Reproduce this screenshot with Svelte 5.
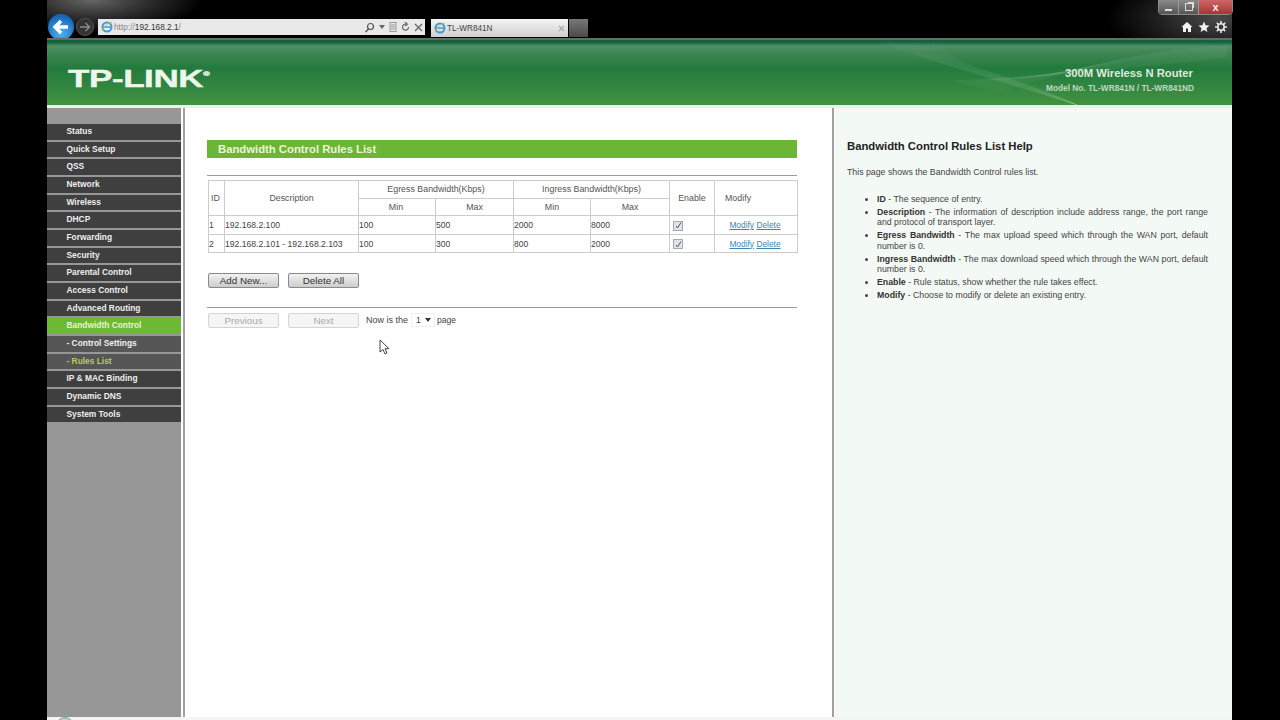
<script>
  const menu = [
    { label: 'Status' },
    { label: 'Quick Setup' },
    { label: 'QSS' },
    { label: 'Network' },
    { label: 'Wireless' },
    { label: 'DHCP' },
    { label: 'Forwarding' },
    { label: 'Security' },
    { label: 'Parental Control' },
    { label: 'Access Control' },
    { label: 'Advanced Routing' },
    { label: 'Bandwidth Control', kind: 'active' },
    { label: '- Control Settings', kind: 'sub' },
    { label: '- Rules List', kind: 'sub current' },
    { label: 'IP & MAC Binding' },
    { label: 'Dynamic DNS' },
    { label: 'System Tools' }
  ];

  const rules = [
    { id: 1, desc: '192.168.2.100', eMin: 100, eMax: 500, iMin: 2000, iMax: 8000 },
    { id: 2, desc: '192.168.2.101 - 192.168.2.103', eMin: 100, eMax: 300, iMin: 800, iMax: 2000 }
  ];

  const waves = [0, 1, 2, 3, 4, 5, 6, 7, 8, 9, 10, 11];
</script>

<div class="screen">
  <div class="glare"></div>

  <div class="win-buttons">
    <span class="wb"><i class="min"></i></span>
    <span class="wb"><i class="restore"></i></span>
    <span class="wb close">x</span>
  </div>

  <header class="chrome">
    <span class="back">
      <svg width="26" height="26" viewBox="0 0 26 26"><path d="M20 13H8M13 7l-6 6 6 6" fill="none" stroke="#fff" stroke-width="3.4"/></svg>
    </span>
    <span class="forward">
      <svg width="16" height="16" viewBox="0 0 16 16"><path d="M3 8h9M8.500 4l4 4-4 4" fill="none" stroke="#8a8a8a" stroke-width="1.500"/></svg>
    </span>
    <div class="address">
      <svg class="ie" width="12" height="12" viewBox="0 0 12 12"><circle cx="6" cy="6" r="4.500" fill="none" stroke="#3f9bd8" stroke-width="2"/><path d="M2 6h8" stroke="#3f9bd8" stroke-width="1.500"/><path d="M1 10C3 5 7 2 11 1" fill="none" stroke="#d9b84a" stroke-width="1"/></svg>
      <span class="url"><span class="dim">http://</span><b>192.168.2.1</b><span class="dim">/</span></span>
      <span class="addr-tools">
        <svg width="11" height="11" viewBox="0 0 11 11"><circle cx="6.500" cy="4.500" r="3" fill="none" stroke="#555" stroke-width="1.200"/><path d="M4.500 7L1.500 10" stroke="#555" stroke-width="1.400"/></svg>
        <svg width="6" height="4" viewBox="0 0 6 4"><path d="M0 0h6L3 4z" fill="#666"/></svg>
        <svg width="8" height="10" viewBox="0 0 8 10"><rect x="1" y="0.500" width="6" height="9" fill="none" stroke="#999"/><path d="M2 3h4M2 5h4M2 7h4" stroke="#999"/></svg>
        <svg width="9" height="10" viewBox="0 0 9 10"><path d="M7.500 5A3 3 0 1 1 5 2.200M4 0l2.500 2.200L4.300 4" fill="none" stroke="#666" stroke-width="1.100"/></svg>
        <svg width="9" height="9" viewBox="0 0 9 9"><path d="M1 1l7 7M8 1L1 8" stroke="#666" stroke-width="1.300"/></svg>
      </span>
    </div>
    <div class="tab">
      <svg class="ie" width="12" height="12" viewBox="0 0 12 12"><circle cx="6" cy="6" r="4.500" fill="none" stroke="#3f9bd8" stroke-width="2"/><path d="M2 6h8" stroke="#3f9bd8" stroke-width="1.500"/><path d="M1 10C3 5 7 2 11 1" fill="none" stroke="#d9b84a" stroke-width="1"/></svg>
      <span class="tab-title">TL-WR841N</span>
      <svg class="tab-x" width="7" height="7" viewBox="0 0 7 7"><path d="M1 1l5 5M6 1L1 6" stroke="#aaa" stroke-width="1.300"/></svg>
    </div>
    <div class="new-tab"></div>
    <div class="tools">
      <svg width="12" height="12" viewBox="0 0 12 12"><path d="M6 1L0.500 6H2v5h3V7.500h2V11h3V6h1.500z" fill="#f2f2f2"/></svg>
      <svg width="12" height="12" viewBox="0 0 12 12"><path d="M6 0.500l1.600 3.700 3.900 .4-3 2.600 .9 3.900L6 9l-3.400 2.100 .9-3.900-3-2.600 3.900-.4z" fill="#f2f2f2"/></svg>
      <svg width="12" height="12" viewBox="0 0 12 12"><circle cx="6" cy="6" r="3.200" fill="none" stroke="#e8e8e8" stroke-width="1.600"/><path d="M6 0v2.400M6 9.600V12M0 6h2.400M9.600 6H12M1.800 1.800l1.700 1.700M8.500 8.500l1.700 1.700M10.200 1.800L8.500 3.500M3.500 8.500l-1.700 1.700" stroke="#e8e8e8" stroke-width="1.600"/></svg>
    </div>
  </header>

  <div class="window">
    <div class="banner">
      <svg class="waves" width="350" height="65" viewBox="0 0 350 65">
        {#each waves as w}
          <path d="M{w * 5} 2C{50 + w * 3} {22 + w} {110} {38 - w} 195 65" fill="none" stroke="#fff" stroke-opacity=".05"/>
          <path d="M345 {6 + w}C{280 - w * 5} {8 + w * 2} {200 - w * 3} {26 + w} {115 - w * 4} {52 - w}" fill="none" stroke="#fff" stroke-opacity=".05"/>
        {/each}
      </svg>
      <div class="logo">TP-LINK<sup>®</sup></div>
      <div class="model">
        <div class="model-name">300M Wireless N Router</div>
        <div class="model-no">Model No. TL-WR841N / TL-WR841ND</div>
      </div>
    </div>

    <div class="body">
      <nav class="side">
        <div class="side-head"></div>
        {#each menu as m}
          <div class="item {m.kind ?? ''}">{m.label}</div>
        {/each}
      </nav>

      <main class="content">
        <h1 class="title">Bandwidth Control Rules List</h1>
        <div class="rule first"></div>

        <table>
          <colgroup>
            <col style="width:16px" /><col style="width:134px" /><col style="width:77px" /><col style="width:78px" />
            <col style="width:77px" /><col style="width:79px" /><col style="width:45px" /><col style="width:83px" />
          </colgroup>
          <thead>
            <tr>
              <th rowspan="2">ID</th>
              <th rowspan="2">Description</th>
              <th colspan="2">Egress Bandwidth(Kbps)</th>
              <th colspan="2">Ingress Bandwidth(Kbps)</th>
              <th rowspan="2">Enable</th>
              <th rowspan="2" class="mod-head">Modify</th>
            </tr>
            <tr>
              <th>Min</th><th>Max</th><th>Min</th><th>Max</th>
            </tr>
          </thead>
          <tbody>
            {#each rules as r}
              <tr>
                <td>{r.id}</td>
                <td>{r.desc}</td>
                <td>{r.eMin}</td>
                <td>{r.eMax}</td>
                <td>{r.iMin}</td>
                <td>{r.iMax}</td>
                <td class="chk">
                  <span class="check">
                    <svg width="7" height="7" viewBox="0 0 7 7"><path d="M1 4l1.500 2L6 .5" fill="none" stroke="#555" stroke-width="1"/></svg>
                  </span>
                </td>
                <td class="center"><a href="#m">Modify</a> <a href="#d">Delete</a></td>
              </tr>
            {/each}
          </tbody>
        </table>

        <div class="btns actions">
          <button>Add New...</button>
          <button>Delete All</button>
        </div>
        <div class="rule second"></div>
        <div class="btns pager">
          <button disabled>Previous</button>
          <button disabled>Next</button>
          <span class="now">Now is the</span>
          <span class="select">1<svg width="6" height="4" viewBox="0 0 6 4"><path d="M0 0h6L3 4z" fill="#333"/></svg></span>
          <span>page</span>
        </div>

        <svg class="cursor" width="12" height="16" viewBox="0 0 12 16"><path d="M1 1v12l3-2.500 2 4.500 2-1-2-4.300h4z" fill="#fff" stroke="#444" stroke-width="1"/></svg>
      </main>

      <aside class="help">
        <h2>Bandwidth Control Rules List Help</h2>
        <p>This page shows the Bandwidth Control rules list.</p>
        <ul>
          <li><b>ID</b> - The sequence of entry.</li>
          <li><b>Description</b> - The information of description include address range, the port range and protocol of transport layer.</li>
          <li><b>Egress Bandwidth</b> - The max upload speed which through the WAN port, default number is 0.</li>
          <li><b>Ingress Bandwidth</b> - The max download speed which through the WAN port, default number is 0.</li>
          <li><b>Enable</b> - Rule status, show whether the rule takes effect.</li>
          <li><b>Modify</b> - Choose to modify or delete an existing entry.</li>
        </ul>
      </aside>
    </div>
    <div class="taskbar"><span class="orb"></span></div>
  </div>
</div>

<style>
  :global(body) { background: #000; }
  .screen {
    position: relative; width: 1280px; height: 720px; overflow: hidden;
    background: #000; font-family: "Liberation Sans", Arial, sans-serif;
    display: flex; flex-direction: column;
  }
  .glare {
    position: absolute; left: 47px; top: 0; width: 1185px; height: 38px;
    background:
      radial-gradient(ellipse 110px 34px at 45px 0, #666 0, #333 45%, transparent 100%),
      radial-gradient(ellipse 110px 45px at 1170px 18px, #4a4a4a 0, #222 50%, transparent 100%);
  }
  .win-buttons {
    position: absolute; left: 1158px; top: -1px; width: 73px; height: 14px;
    display: flex; border: 1px solid #8a8a8a; border-radius: 0 0 4px 4px; overflow: hidden;
  }
  .wb {
    flex: 0 0 19px; background: linear-gradient(#8a8a8a, #555); border-right: 1px solid #999;
    display: flex; align-items: center; justify-content: center; position: relative;
  }
  .wb.close {
    flex: 1; border: 0; background: linear-gradient(#c66, #a33);
    color: #eee; font: bold 11px "Liberation Sans", sans-serif;
  }
  .min { width: 7px; height: 2px; background: #ddd; margin-top: 5px; }
  .restore { width: 6px; height: 6px; border: 1px solid #ddd; box-shadow: 2px -2px 0 -1px #ddd; }

  .chrome {
    position: relative; height: 38px; margin-left: 47px; width: 1185px; box-sizing: border-box;
    display: flex; align-items: flex-start; flex: none;
  }
  .back {
    width: 26px; height: 26px; margin: 14px 0 0 1px; border-radius: 50%;
    background: radial-gradient(circle at 50% 75%, #4db4ef, #1566b8 75%);
  }
  .forward {
    width: 16px; height: 16px; margin: 19px 0 0 3px; border-radius: 50%;
    background: #333; box-shadow: 0 0 0 1px #555;
  }
  .address {
    width: 327px; height: 16px; margin: 19px 0 0 5px; background: #e9e9e9;
    display: flex; align-items: center; padding-left: 3px; box-sizing: border-box;
  }
  .ie { flex: none; }
  .url { font-size: 8.300px; margin-left: 1px; color: #333; }
  .url b { font-weight: normal; }
  .dim { color: #888; }
  .addr-tools { margin-left: auto; display: flex; align-items: center; gap: 4px; padding-right: 2px; }
  .tab {
    width: 137px; height: 18px; margin: 19px 0 0 6px; box-sizing: border-box;
    background: linear-gradient(#f4f4f4, #cfcfcf); display: flex; align-items: center; padding: 0 3px;
  }
  .tab-title { font-size: 8.200px; margin-left: 1px; color: #444; }
  .tab-x { margin-left: auto; }
  .new-tab { width: 19px; height: 18px; margin: 19px 0 0 1px; background: linear-gradient(#777, #4a4a4a); }
  .tools { margin: 21px 0 0 auto; padding-right: 5px; display: flex; gap: 5px; }

  .window { flex: 1; width: 1185px; margin-left: 47px; display: flex; flex-direction: column; background: #fff; min-height: 0; }
  .banner {
    position: relative; flex: none; height: 70px; box-sizing: border-box;
    border-top: 2px solid #6a6a6a; border-bottom: 3px solid #e9f1ea; overflow: hidden;
    display: flex; align-items: center; justify-content: space-between;
    background: linear-gradient(#14613c 0, #14613c 2px, #4f8f66 6px, #3f8653 13px, #227a3c 28px, #2f8540 44px, #439240 100%);
  }
  .waves { position: absolute; right: 0; top: 0; }
  .logo {
    font: bold 24px "Liberation Sans", sans-serif; color: #eef6ec; margin: 12px 0 0 21px;
    transform: scaleX(1.460); transform-origin: left center; letter-spacing: -.3px; white-space: nowrap;
    -webkit-text-stroke: .4px #eef6ec;
  }
  .logo sup { font-size: 6px; vertical-align: 11px; font-weight: normal; line-height: 0; }
  .model { position: relative; text-align: right; padding: 0 39px 0 0; margin-top: 12px; }
  .model-name { font-size: 11.250px; font-weight: bold; color: #dfeadd; line-height: 18px; }
  .model-no { font-size: 8.300px; font-weight: bold; color: #c0d6c0; line-height: 12px; margin-right: -1px; }

  .body { flex: 1; display: flex; min-height: 0; }
  .side {
    flex: none; width: 134px; background: #979797; display: flex; flex-direction: column; gap: 2px;
  }
  .side-head { height: 14px; flex: none; }
  .item {
    flex: none; height: 15.660px; line-height: 15.660px; padding-left: 19.500px; box-sizing: border-box;
    background: #3f3f3f; color: #eee; font-size: 8.400px; font-weight: bold;
  }
  .item.active { background: #6db934; color: #e6f3d6; height: 17px; line-height: 17px; margin: -1px 0 -.340px; }
  .item.sub { background: #565656; }
  .item.current { color: #b4cd5c; }

  .content {
    position: relative; flex: none; width: 651px; box-sizing: border-box; background: #fff;
    margin-left: 2px; border-left: 2px solid #a0a0a0; border-right: 2px solid #a0a0a0;
    padding: 32px 0 0 22px;
  }
  .title {
    margin: 0; width: 590px; height: 18px; line-height: 18px; padding-left: 11px; box-sizing: border-box;
    background: #6db535; color: #e8f4dc; font-size: 11.300px; font-weight: bold;
  }
  .rule { width: 590px; height: 1px; background: #7fa99e; }
  .rule.first { margin-top: 17px; }
  .rule.second { margin-top: 19px; }

  table {
    margin: 4px 0 0 1px; width: 589px; table-layout: fixed; border-collapse: collapse;
    font-size: 8.600px; color: #444;
  }
  th, td { border: 1px solid #ccc; padding: 0; height: 16.600px; overflow: hidden; white-space: nowrap; }
  th { font-weight: normal; text-align: center; color: #555; padding: 0; font-size: 8.850px; }
  th.mod-head { text-align: left; padding-left: 10px; }
  th:first-child { padding-right: 2px; }
  td { padding-top: 1px; }
  td.center { text-align: center; padding: 0 2px 0 0; font-size: 8.400px; }
  td.chk { padding-left: 3px; }
  a { color: #3a86b4; }
  .check {
    display: inline-flex; align-items: center; justify-content: center; vertical-align: middle;
    width: 8px; height: 8px; background: #dfe3ea; border: 1px solid #a5a9b4;
  }

  .btns { display: flex; align-items: center; margin-left: 1px; font-size: 8.600px; color: #444; }
  .btns button {
    width: 71px; height: 15px; padding: 0; margin-right: 9px; font: 9.800px "Liberation Sans", sans-serif; color: #333;
    border: 1px solid #8a8a8a; border-radius: 2px; background: linear-gradient(#f2f2f2, #cdcdcd);
  }
  .btns button:disabled { color: #aaa; border-color: #d4d4d4; background: #f5f5f5; }
  .actions { margin-top: 20px; }
  .pager { margin-top: 5px; height: 14px; }
  .now { margin: 0 3px 0 -2px; font-size: 9px; }
  .select {
    width: 24px; height: 14px; box-sizing: border-box; margin-right: 2px; padding: 0 3px 0 4px;
    display: flex; align-items: center; justify-content: space-between; background: #fff; border: 1px solid #f0f0f0;
  }
  .cursor { position: absolute; left: 194px; top: 231px; }

  .help {
    flex: 1; background: #f3f9f5; margin-left: 1px; padding: 32px 24px 0 12px; color: #444; font-size: 8.780px;
  }
  .help h2 { margin: 0; font-size: 11.300px; line-height: 13px; color: #222; }
  .help p { margin: 14px 0 0; line-height: 11px; }
  .help ul { margin: 16px 0 0; padding: 0 0 0 30px; }
  .help li { line-height: 10.500px; margin-bottom: 2.400px; text-align: justify; }
  .help b { color: #333; }

  .taskbar { position: relative; height: 3px; flex: none; background: #f5f5f5; overflow: hidden; }
  .orb { position: absolute; left: 9px; top: 0; width: 18px; height: 18px; border-radius: 50%; background: #b8d0d8; border: 1px solid #7d9aa5; box-sizing: border-box; }
</style>
